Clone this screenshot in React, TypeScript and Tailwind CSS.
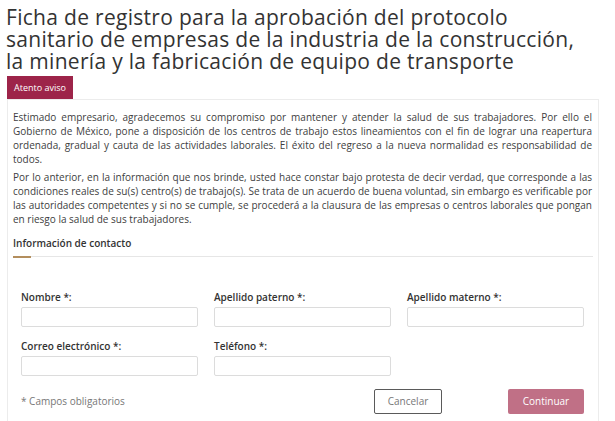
import React from "react";

const font = { fontFamily: '"Open Sans", "Noto Sans", sans-serif' };

function Field({ label }: { label: string }) {
  return (
    <div className="flex flex-col">
      <label className="text-[10px] leading-[12px] font-semibold text-[#333333] mb-[4px]">{label}</label>
      <div className="h-[20px] border border-[#dcdcdc] rounded-[2px] bg-white" />
    </div>
  );
}

export default function App() {
  return (
    <div className="w-[615px] h-[421px] overflow-hidden bg-white text-[#404041]" style={font}>
      <h1 className="pl-[6px] pt-[6px] text-[21px] leading-[22px] font-medium text-[#333333] tracking-[0.3px] whitespace-nowrap">
        Ficha de registro para la aprobación del protocolo
        <br />
        sanitario de empresas de la industria de la construcción,
        <br />
        la minería y la fabricación de equipo de transporte
      </h1>
      <div className="mt-[4px] ml-[7px] w-[66px] h-[23px] bg-[#9d2449] text-white text-[9px] flex items-center justify-center">
        Atento aviso
      </div>
      <div className="ml-[7px] w-[592px] border border-[#ececec] pl-[5px] pr-[6px] pt-[10px] h-[330px]">
        <p className="text-[10px] leading-[14px] text-justify mb-[4px]">
          Estimado empresario, agradecemos su compromiso por mantener y atender la salud de sus trabajadores. Por ello el Gobierno de México, pone a disposición de los centros de trabajo estos lineamientos con el fin de lograr una reapertura ordenada, gradual y cauta de las actividades laborales. El éxito del regreso a la nueva normalidad es responsabilidad de todos.
        </p>
        <p className="text-[10px] leading-[14px] text-justify">
          Por lo anterior, en la información que nos brinde, usted hace constar bajo protesta de decir verdad, que corresponde a las condiciones reales de su(s) centro(s) de trabajo(s). Se trata de un acuerdo de buena voluntad, sin embargo es verificable por las autoridades competentes y si no se cumple, se procederá a la clausura de las empresas o centros laborales que pongan en riesgo la salud de sus trabajadores.
        </p>
        <div className="mt-[10px] text-[10px] leading-[14px] font-semibold text-[#333333]">Información de contacto</div>
        <div className="mt-[6px] mr-[-1px] flex items-start">
          <div className="w-[18px] h-[2px] bg-[#b38e5d]" />
          <div className="flex-1 h-px bg-[#e6e6e6]" />
        </div>
        <div className="px-[8px] pt-[33px]">
          <div className="grid grid-cols-3 gap-x-[16px] gap-y-[13px]">
            <Field label="Nombre *:" />
            <Field label="Apellido paterno *:" />
            <Field label="Apellido materno *:" />
            <Field label="Correo electrónico *:" />
            <Field label="Teléfono *:" />
          </div>
          <div className="mt-[13px] flex items-center">
            <span className="text-[10px] text-[#777777]">* Campos obligatorios</span>
            <div className="ml-auto flex gap-[66px]">
              <button className="w-[68px] h-[25px] border border-[#5a5a5a] rounded-[2px] text-[10px] text-[#777777] bg-white">
                Cancelar
              </button>
              <button className="w-[76px] h-[25px] rounded-[2px] text-[10px] text-white bg-[#c07086]">
                Continuar
              </button>
            </div>
          </div>
        </div>
      </div>
    </div>
  );
}
